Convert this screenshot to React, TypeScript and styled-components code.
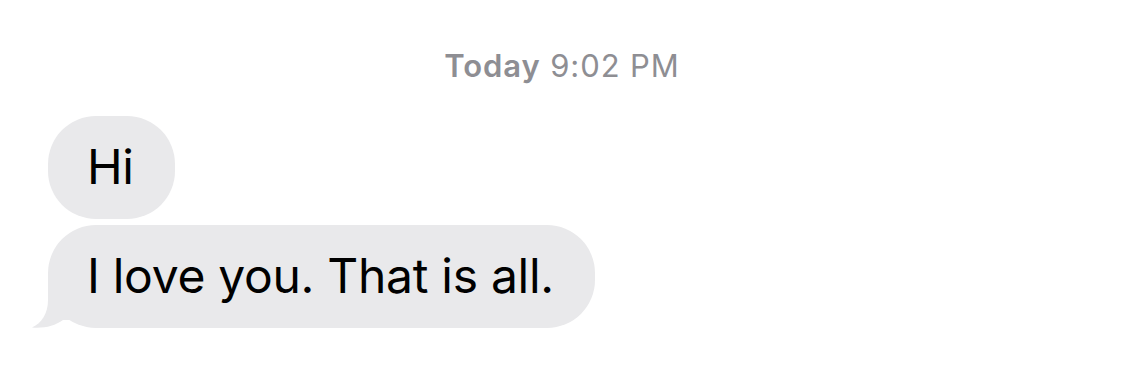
import React from "react";
import styled, { createGlobalStyle } from "styled-components";

const Global = createGlobalStyle`
  html, body { margin: 0; padding: 0; background: #ffffff; }
  body { font-family: "Inter", "Noto Sans", sans-serif; -webkit-font-smoothing: antialiased; }
`;

const Thread = styled.main`
  width: 1124px;
  height: 374px;
  box-sizing: border-box;
  padding: 46px 0 0 48px;
  display: flex;
  flex-direction: column;
  overflow: hidden;
`;

const Stamp = styled.div`
  align-self: center;
  margin-left: -48px;
  font-size: 31px;
  line-height: 40px;
  color: #8e8e93;
  letter-spacing: 0.9px;
  margin-bottom: 30px;
  & b { font-weight: 600; }
`;

const Group = styled.div`
  display: flex;
  flex-direction: column;
  align-items: flex-start;
  gap: 6px;
`;

const Bubble = styled.div`
  position: relative;
  background: #e9e9eb;
  color: #000;
  font-size: 48px;
  line-height: 60px;
  padding: 21px 41px 22px 39px;
  border-radius: 48px;
  letter-spacing: -0.3px;
`;

const Tail = styled.svg`
  position: absolute;
  left: -17px;
  bottom: 0;
  width: 44px;
  height: 52px;
`;

export default function App() {
  return (
    <>
      <Global />
      <Thread>
        <Stamp>
          <b>Today</b> 9:02 PM
        </Stamp>
        <Group>
          <Bubble>Hi</Bubble>
          <Bubble>
            I love you. That is all.
            <Tail viewBox="0 0 44 52" aria-hidden="true">
              <path
                d="M17 0 L17 24 C17 37 11 47 1 51.5 C13 52.5 24 50 32 44 L44 44 L44 0 Z"
                fill="#e9e9eb"
              />
            </Tail>
          </Bubble>
        </Group>
      </Thread>
    </>
  );
}
